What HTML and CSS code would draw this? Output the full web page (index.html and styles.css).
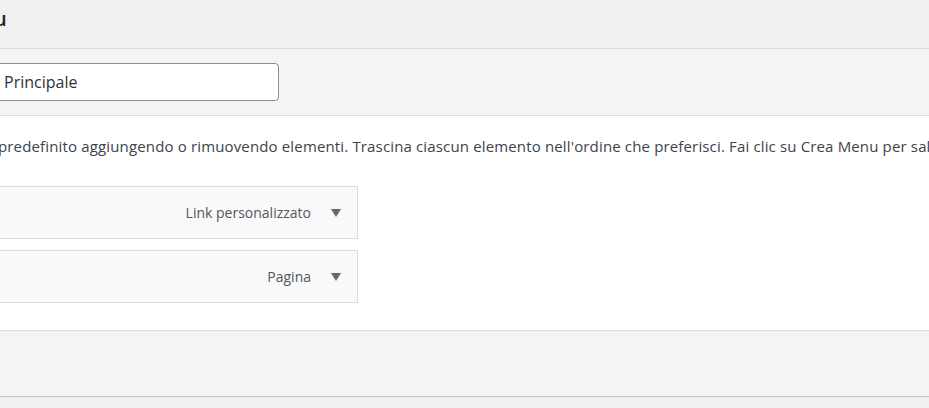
FILE: index.html
```html
<!DOCTYPE html>
<html lang="it">
<head>
<meta charset="utf-8">
<title>Menu</title>
<link rel="stylesheet" href="styles.css">
</head>
<body>
<div class="page">
  <div class="top-band">
    <h2 class="title">u</h2>
  </div>
  <div class="name-band">
    <input class="menu-name" type="text" value="Principale">
  </div>
  <div class="menu-body">
    <p class="hint">predefinito aggiungendo o rimuovendo elementi. Trascina ciascun elemento nell'ordine che preferisci. Fai clic su Crea Menu per salvare le modifiche.</p>
    <ul class="items">
      <li class="item">
        <span class="item-type">Link personalizzato</span>
        <span class="arrow"></span>
      </li>
      <li class="item">
        <span class="item-type">Pagina</span>
        <span class="arrow"></span>
      </li>
    </ul>
  </div>
  <div class="footer-band"></div>
</div>
</body>
</html>
```
FILE: styles.css
```css
html, body {
  margin: 0;
  padding: 0;
  background: #f0f0f1;
  overflow: hidden;
}
body {
  font-family: "Open Sans", "Noto Sans", sans-serif;
  color: #3c434a;
}
.page {
  width: 929px;
  height: 408px;
  overflow: hidden;
}
.top-band {
  height: 49px;
  box-sizing: border-box;
  border-bottom: 1px solid #dcdcde;
  background: #f0f0f0;
}
.title {
  margin: 0 0 0 -6px;
  padding-top: 6px;
  font-size: 20px;
  font-weight: 600;
  color: #1d2327;
  line-height: 26px;
}
.name-band {
  background: #f4f4f4;
  height: 67px;
  box-sizing: border-box;
  border-bottom: 1px solid #dcdcde;
  padding-top: 14px;
}
.menu-name {
  display: block;
  margin: 0 0 0 -9px;
  width: 288px;
  height: 38px;
  box-sizing: border-box;
  border: 1px solid #8c8f94;
  border-radius: 4px;
  background: #fff;
  padding: 0 0 0 12px;
  font-family: inherit;
  font-size: 16px;
  color: #2c3338;
  outline: none;
}
.menu-body {
  background: #fff;
  height: 215px;
  box-sizing: border-box;
  border-bottom: 1px solid #dcdcde;
  padding-top: 19px;
}
.hint {
  margin: 0 0 0 -2px;
  font-size: 15px;
  letter-spacing: 0.15px;
  line-height: 22px;
  white-space: nowrap;
}
.items {
  list-style: none;
  margin: 29px 0 0 -10px;
  padding: 0;
  display: flex;
  flex-direction: column;
  gap: 11px;
}
.item {
  width: 368px;
  height: 53px;
  box-sizing: border-box;
  border: 1px solid #dcdcde;
  background: #f9f9f9;
  display: flex;
  align-items: center;
  justify-content: flex-end;
  padding-right: 16px;
  gap: 20px;
  font-size: 14px;
  color: #50575e;
}
.arrow {
  width: 0;
  height: 0;
  border-left: 5px solid transparent;
  border-right: 5px solid transparent;
  border-top: 8px solid #646970;
}
.footer-band {
  background: #f4f4f4;
  height: 66px;
  box-sizing: border-box;
  border-bottom: 1px solid #c3c4c7;
}
```
